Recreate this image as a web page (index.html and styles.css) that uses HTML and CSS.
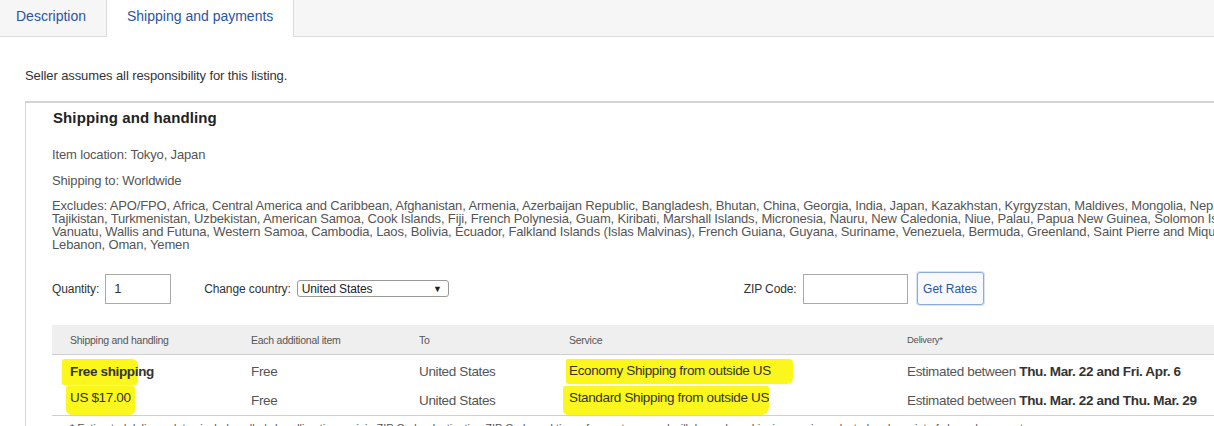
FILE: index.html
```html
<!DOCTYPE html>
<html lang="en">
<head>
	<meta charset="UTF-8">
	<title>Shipping and payments</title>
	<link rel="stylesheet" href="styles.css">
</head>
<body>
	<div class="tabs">
		<div class="tab">Description</div>
		<div class="tab active">Shipping and payments</div>
	</div>
	<div class="content">
		<p class="seller">Seller assumes all responsibility for this listing.</p>
		<div class="box">
			<h2>Shipping and handling</h2>
			<p class="info">Item location: Tokyo, Japan</p>
			<p class="info">Shipping to: Worldwide</p>
			<div class="excludes">
				<span>Excludes: APO/FPO, Africa, Central America and Caribbean, Afghanistan, Armenia, Azerbaijan Republic, Bangladesh, Bhutan, China, Georgia, India, Japan, Kazakhstan, Kyrgyzstan, Maldives, Mongolia, Nepal, Pakistan, Philippines, Russian Federation, Sri Lanka,</span>
				<span>Tajikistan, Turkmenistan, Uzbekistan, American Samoa, Cook Islands, Fiji, French Polynesia, Guam, Kiribati, Marshall Islands, Micronesia, Nauru, New Caledonia, Niue, Palau, Papua New Guinea, Solomon Islands, Tonga, Tuvalu,</span>
				<span>Vanuatu, Wallis and Futuna, Western Samoa, Cambodia, Laos, Bolivia, Ecuador, Falkland Islands (Islas Malvinas), French Guiana, Guyana, Suriname, Venezuela, Bermuda, Greenland, Saint Pierre and Miquelon, Iran, Iraq, Jordan,</span>
				<span>Lebanon, Oman, Yemen</span>
			</div>
			<div class="rates">
				<label class="field">Quantity: <input class="qty" type="text" value="1"></label>
				<label class="field country">Change country:
					<span class="select"><span>United States</span><span class="arrow">▼</span></span>
				</label>
				<label class="field zip">ZIP Code: <input class="zipinput" type="text" value=""></label>
				<button class="getrates">Get Rates</button>
			</div>
			<table class="ship">
				<thead>
					<tr>
						<th class="c1">Shipping and handling</th>
						<th class="c2">Each additional item</th>
						<th class="c3">To</th>
						<th class="c4">Service</th>
						<th class="c5 small">Delivery*</th>
					</tr>
				</thead>
				<tbody>
					<tr>
						<td><b><mark class="hl hl-a">Free shippi</mark>ng</b></td>
						<td>Free</td>
						<td>United States</td>
						<td><mark class="hl hl-b">Economy Shipping from outside US</mark></td>
						<td>Estimated between <b>Thu. Mar. 22 and Fri. Apr. 6</b></td>
					</tr>
					<tr>
						<td><mark class="hl hl-c">US $17.00</mark></td>
						<td>Free</td>
						<td>United States</td>
						<td><mark class="hl hl-d">Standard Shipping from outside US</mark></td>
						<td>Estimated between <b>Thu. Mar. 22 and Thu. Mar. 29</b></td>
					</tr>
				</tbody>
			</table>
			<p class="note">* Estimated delivery dates include seller's handling time, origin ZIP Code, destination ZIP Code and time of acceptance and will depend on shipping service selected and receipt of cleared payment.</p>
		</div>
	</div>
</body>
</html>
```

FILE: styles.css
```css
html,body{margin: 0;padding: 0;overflow: hidden;}
body{font: 13px/16px "Liberation Sans", Arial, sans-serif;color: #555;background: #fff;width: 1214px;height: 426px;}
p,h2{margin: 0;}

.tabs{display: flex;height: 36px;background: #f6f6f6;border-bottom: 1px solid #dcdcdc;}
.tab{padding: 0 16px 0 16px;line-height: 32px;font-size: 14px;color: #2b54a0;width: 74px;}
.tab.active{background: #fff;border-left: 1px solid #dcdcdc;border-right: 1px solid #dcdcdc;height: 37px;padding: 0 20px;width: auto;}

.content{padding: 0 0 0 25px;}
.seller{margin-top: 31px;color: #333;letter-spacing: -0.1px;}

.box{margin-top: 17px;width: 1400px;border: 1px solid #d4d4d4;border-top-width: 2px;padding: 5px 0 0 26px;}
h2{font-size: 15px;line-height: 20px;color: #222;font-weight: bold;margin-left: 1px;letter-spacing: 0.1px;}
.info{margin-top: 19px;line-height: 16px;letter-spacing: -0.15px;}
.info + .info{margin-top: 10px;}
.excludes{margin-top: 10px;line-height: 13px;}
.excludes span{display: block;white-space: nowrap;letter-spacing: -0.15px;}

.rates{display: flex;align-items: center;margin-top: 21px;height: 33px;}
.field{display: flex;align-items: center;gap: 6px;color: #333;font-size: 12px;letter-spacing: -0.1px;}
.qty,.zipinput{border: 1px solid #a9a9a9;padding: 0 8px;font: 13px "Liberation Sans", Arial, sans-serif;color: #333;box-sizing: border-box;height: 30px;}
.qty{width: 66px;}
.zipinput{width: 105px;}
.country{margin-left: 33px;}
.select{display: flex;justify-content: space-between;align-items: center;width: 152px;height: 17px;box-sizing: border-box;border: 1px solid #9a9a9a;border-radius: 3px;padding: 0 6px 0 4px;font-size: 12px;color: #222;}
.arrow{font-size: 9px;}
.zip{margin-left: 295px;}
.getrates{margin-left: 9px;width: 67px;height: 33px;border: 1px solid #8eaadb;border-radius: 3px;background: #f7f9fd;color: #2b54a0;font: 12px "Liberation Sans", Arial, sans-serif;padding: 0;box-shadow: 0 0 0 1px #d7e2f4;}

.ship{margin-top: 20px;border-collapse: collapse;width: 1330px;}
.ship th{background: #efefef;height: 29px;text-align: left;font-weight: normal;font-size: 10.5px;color: #555;padding: 0 0 0 18px;border-bottom: 1px solid #d0d0d0;letter-spacing: -0.25px;}
.ship th.small{font-size: 9.5px;}
.c1{width: 163px;}
.c2{width: 150px;}
.c3{width: 132px;}
.c4{width: 320px;}
.ship td{height: 29px;padding: 0 0 0 18px;font-size: 13.5px;color: #555;letter-spacing: -0.35px;}
.ship td b{color: #333;}
.ship tbody tr:last-child td{border-bottom: 1px solid #d0d0d0;}
.ship tbody tr:first-child td{padding-top: 2px;}

.hl{background: #fbf71c;color: #333;display: inline-block;line-height: 16px;}
.hl-a{padding: 5px 0 5px 8px;margin-left: -8px;border-radius: 3px 6px 4px 2px;}
.hl-b{padding: 4px 22px 5px 3px;margin-left: -3px;border-radius: 2px 4px 6px 3px;}
.hl-c{padding: 4px 4px 9px 4px;margin-left: -4px;border-radius: 2px 3px 5px 6px;}
.hl-d{padding: 4px 0 9px 6px;margin-left: -6px;border-radius: 3px 2px 8px 5px;}

.note{margin: 4px 0 0 18px;font-size: 11px;color: #555;white-space: nowrap;}
```
